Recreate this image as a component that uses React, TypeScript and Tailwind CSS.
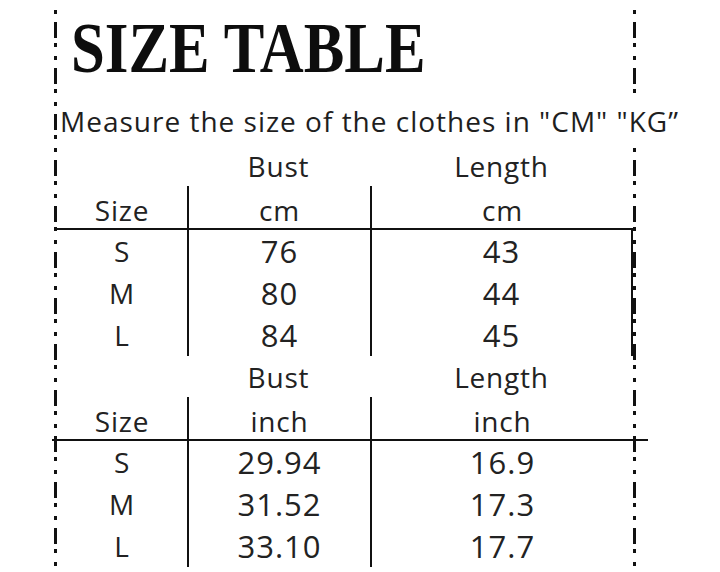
const sans = "font-['Open_Sans','Lato',sans-serif]";

type Row = { size: string; bust: string; length: string };

const cmRows: Row[] = [
  { size: 'S', bust: '76', length: '43' },
  { size: 'M', bust: '80', length: '44' },
  { size: 'L', bust: '84', length: '45' },
];

const inchRows: Row[] = [
  { size: 'S', bust: '29.94', length: '16.9' },
  { size: 'M', bust: '31.52', length: '17.3' },
  { size: 'L', bust: '33.10', length: '17.7' },
];

// dash-dot-dot frame line, drawn as svg segments
function DashLine({ segments }: { segments: [number, number][] }) {
  return (
    <svg className="h-[572px] w-[3px] shrink-0" viewBox="0 0 3 572" aria-hidden="true">
      {segments.map(([y1, y2]) => (
        <line
          key={y1}
          x1={1.5}
          x2={1.5}
          y1={y1}
          y2={y2}
          stroke="#111"
          strokeWidth={3}
          strokeDasharray="4 8 16 5 4 9"
        />
      ))}
    </svg>
  );
}

function SizeTable({ unit, rows, wide }: { unit: string; rows: Row[]; wide?: boolean }) {
  return (
    <div className={`flex flex-col ${sans} text-[28px] leading-none tracking-[0.8px] text-[#222]`}>
      <div className="grid h-[41px] grid-cols-[130px_183px_263px] items-center">
        <span />
        <span className="text-center">Bust</span>
        <span className="text-center">Length</span>
      </div>
      <div className="grid h-[42px] grid-cols-[130px_183px_263px]">
        <span className="flex items-center justify-center pt-[5px]">Size</span>
        <span className="flex items-center justify-center border-l-2 border-[#111] pt-[5px]">{unit}</span>
        <span className="flex items-center justify-center border-l-2 border-[#111] pt-[5px]">{unit}</span>
      </div>
      {wide ? (
        <div className="-ml-[5px] h-[2px] w-[596px] bg-[#111]" />
      ) : (
        <div className="h-[2px] w-[576px] bg-[#111]" />
      )}
      {rows.map((r) => (
        <div key={r.size} className="grid h-[42px] grid-cols-[130px_183px_263px]">
          <span className="flex items-center justify-center">{r.size}</span>
          <span className="flex items-center justify-center border-l-2 border-[#111] text-[31px] tracking-[1px]">
            {r.bust}
          </span>
          <span
            className={`flex items-center justify-center ${wide ? '' : 'border-r-2'} border-l-2 border-[#111] text-[31px] tracking-[1px]`}
          >
            {r.length}
          </span>
        </div>
      ))}
    </div>
  );
}

export default function App() {
  return (
    <div className="flex h-[572px] w-[720px] overflow-hidden bg-white">
      <div className="w-[54px] shrink-0" />
      <DashLine segments={[[10, 572]]} />

      <main className="flex w-[576px] shrink-0 flex-col">
        <h1 className="h-[96px] pl-[14px] pt-[12px] font-['Liberation_Serif',serif] text-[72px] font-bold leading-none text-[#0d0d0d]">
          <span className="inline-block origin-left scale-x-[0.845]">SIZE TABLE</span>
        </h1>
        <p className={`h-[49px] whitespace-nowrap pl-[3px] pt-[11px] ${sans} text-[28px] leading-none tracking-[1px] text-[#1e1e1e]`}>
          Measure the size of the clothes in "CM" "KG”
        </p>
        <SizeTable unit="cm" rows={cmRows} />
        <SizeTable unit="inch" rows={inchRows} wide />
      </main>

      <DashLine
        segments={[
          [10, 97],
          [148, 572],
        ]}
      />
    </div>
  );
}
